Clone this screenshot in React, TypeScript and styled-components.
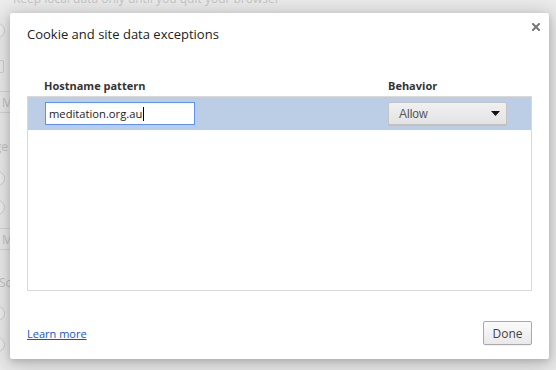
import React from 'react'
import styled, { createGlobalStyle } from 'styled-components'

const GlobalStyle = createGlobalStyle`
  html, body {
    margin: 0;
    padding: 0;
  }
  body {
    font-family: 'Open Sans', 'Noto Sans', sans-serif;
    font-size: 12px;
    color: #333;
  }
`

const Screen = styled.div`
  position: relative;
  width: 556px;
  height: 370px;
  overflow: hidden;
  background: #efefef;
`

// the settings page that sits faded behind the dialog
const BehindPage = styled.div`
  display: flex;
  flex-direction: column;
  color: #c8c8c8;
  font-size: 12px;
  line-height: 15px;
`

const FadedNote = styled.div`
  margin: -9px 0 0 13px;
  white-space: nowrap;
`

const FadedRow = styled.div<{ $top: number; $height: number }>`
  margin-top: ${p => p.$top}px;
  height: ${p => p.$height}px;
  display: flex;
  align-items: center;
`

const FadedRadio = styled.span`
  width: 13px;
  height: 13px;
  margin-left: -10px;
  border: 1px solid #d2d2d2;
  border-radius: 50%;
  background: #f4f4f4;
`

const FadedCheck = styled.span`
  width: 11px;
  height: 11px;
  margin-left: -9px;
  border: 1px solid #d2d2d2;
  border-radius: 2px;
`

const FadedButton = styled.span`
  margin-left: -8px;
  height: 20px;
  padding: 0 8px 0 9px;
  border: 1px solid #dadada;
  border-radius: 2px;
  display: flex;
  align-items: center;
  white-space: nowrap;
`

const FadedTail = styled.span`
  width: 8px;
  display: flex;
  justify-content: flex-end;
  white-space: nowrap;
`

const FadedHead = styled.span`
  margin-left: -1px;
  white-space: nowrap;
`

const Overlay = styled.div`
  position: absolute;
  inset: 0;
  padding: 13px 0 0 10px;
`

const Dialog = styled.div`
  width: 539px;
  height: 346px;
  box-sizing: border-box;
  padding: 12px 17px 14px 17px;
  display: flex;
  flex-direction: column;
  background: #fff;
  border-radius: 2px;
  box-shadow: 0 4px 23px 5px rgba(0, 0, 0, 0.2), 0 2px 6px rgba(0, 0, 0, 0.15);
`

const TitleBar = styled.div`
  display: flex;
  justify-content: space-between;
  align-items: flex-start;
  margin-right: -8px;
`

const Title = styled.h1`
  margin: 0;
  font-size: 13px;
  font-weight: normal;
  line-height: 18px;
  color: #222;
`

const CloseButton = styled.button`
  margin-top: -2px;
  padding: 0;
  width: 8px;
  height: 8px;
  border: 0;
  background: none;
  display: flex;
`

const Columns = styled.div`
  display: grid;
  grid-template-columns: 344px 1fr;
  padding-left: 17px;
`

const HeaderRow = styled(Columns)`
  margin-top: 35px;
  font-size: 11px;
  font-weight: bold;
  line-height: 15px;
  color: #333;
`

const ListBox = styled.div`
  margin-top: 3px;
  height: 195px;
  box-sizing: border-box;
  border: 1px solid #d9d9d9;
`

const ListRow = styled(Columns)<{ $selected?: boolean }>`
  height: 33px;
  box-sizing: border-box;
  padding-top: 5px;
  padding-left: 17px;
  grid-template-columns: 343px 1fr;
  background: ${p => (p.$selected ? '#bccde6' : 'transparent')};
`

const TextField = styled.div`
  width: 150px;
  height: 23px;
  box-sizing: border-box;
  padding-left: 3px;
  border: 1px solid #5b93ee;
  background: #fff;
  display: flex;
  align-items: center;
  color: #222;
  font-size: 11.2px;
`

const Caret = styled.span`
  width: 1px;
  height: 14px;
  margin-left: 1px;
  background: #000;
`

const SelectBox = styled.div`
  width: 119px;
  height: 23px;
  box-sizing: border-box;
  padding: 0 6px 0 10px;
  border: 1px solid #c4c4c4;
  border-radius: 2px;
  background: linear-gradient(#f0f0f0, #e3e3e3);
  box-shadow: 0 1px 0 rgba(0, 0, 0, 0.06);
  display: flex;
  align-items: center;
  justify-content: space-between;
  font-family: 'Liberation Sans', Arial, sans-serif;
  font-size: 12px;
  color: #555;
`

const Footer = styled.div`
  margin-top: auto;
  display: flex;
  justify-content: space-between;
  align-items: center;
`

const HelpLink = styled.a`
  color: #1155cc;
  font-size: 11px;
  text-decoration: underline;
  line-height: 15px;
`

const Button = styled.button`
  width: 49px;
  height: 24px;
  padding: 0;
  border: 1px solid #a9a9a9;
  border-radius: 2px;
  background: linear-gradient(#fbfbfb, #e9e9e9);
  box-shadow: 0 1px 0 rgba(0, 0, 0, 0.06);
  font-family: 'Open Sans', 'Noto Sans', sans-serif;
  font-size: 12px;
  color: #444;
`

export default function App() {
  return (
    <Screen>
      <GlobalStyle />
      <BehindPage>
        <FadedNote>Keep local data only until you quit your browser</FadedNote>
        <FadedRow $top={17} $height={15}>
          <FadedRadio />
        </FadedRow>
        <FadedRow $top={22} $height={13}>
          <FadedCheck />
        </FadedRow>
        <FadedRow $top={18} $height={22}>
          <FadedButton>Manage exceptions...</FadedButton>
        </FadedRow>
        <FadedRow $top={26} $height={15}>
          <FadedTail>Image</FadedTail>
        </FadedRow>
        <FadedRow $top={17} $height={15}>
          <FadedRadio />
        </FadedRow>
        <FadedRow $top={14} $height={15}>
          <FadedRadio />
        </FadedRow>
        <FadedRow $top={13} $height={22}>
          <FadedButton>Manage exceptions...</FadedButton>
        </FadedRow>
        <FadedRow $top={25} $height={15}>
          <FadedHead>Scripts</FadedHead>
        </FadedRow>
        <FadedRow $top={16} $height={15}>
          <FadedRadio />
        </FadedRow>
        <FadedRow $top={16} $height={15}>
          <FadedRadio />
        </FadedRow>
      </BehindPage>

      <Overlay>
        <Dialog>
          <TitleBar>
            <Title>Cookie and site data exceptions</Title>
            <CloseButton aria-label="Close">
              <svg width="8" height="8" viewBox="0 0 8 8">
                <path d="M1 1 L7 7 M7 1 L1 7" stroke="#777" strokeWidth="2" strokeLinecap="square" />
              </svg>
            </CloseButton>
          </TitleBar>

          <HeaderRow>
            <span>Hostname pattern</span>
            <span>Behavior</span>
          </HeaderRow>

          <ListBox>
            <ListRow $selected>
              <TextField>
                meditation.org.au
                <Caret />
              </TextField>
              <SelectBox>
                <span>Allow</span>
                <svg width="9" height="5" viewBox="0 0 9 5">
                  <path d="M0 0 H9 L4.5 5 Z" fill="#111" />
                </svg>
              </SelectBox>
            </ListRow>
          </ListBox>

          <Footer>
            <HelpLink href="#">Learn more</HelpLink>
            <Button>Done</Button>
          </Footer>
        </Dialog>
      </Overlay>
    </Screen>
  )
}
